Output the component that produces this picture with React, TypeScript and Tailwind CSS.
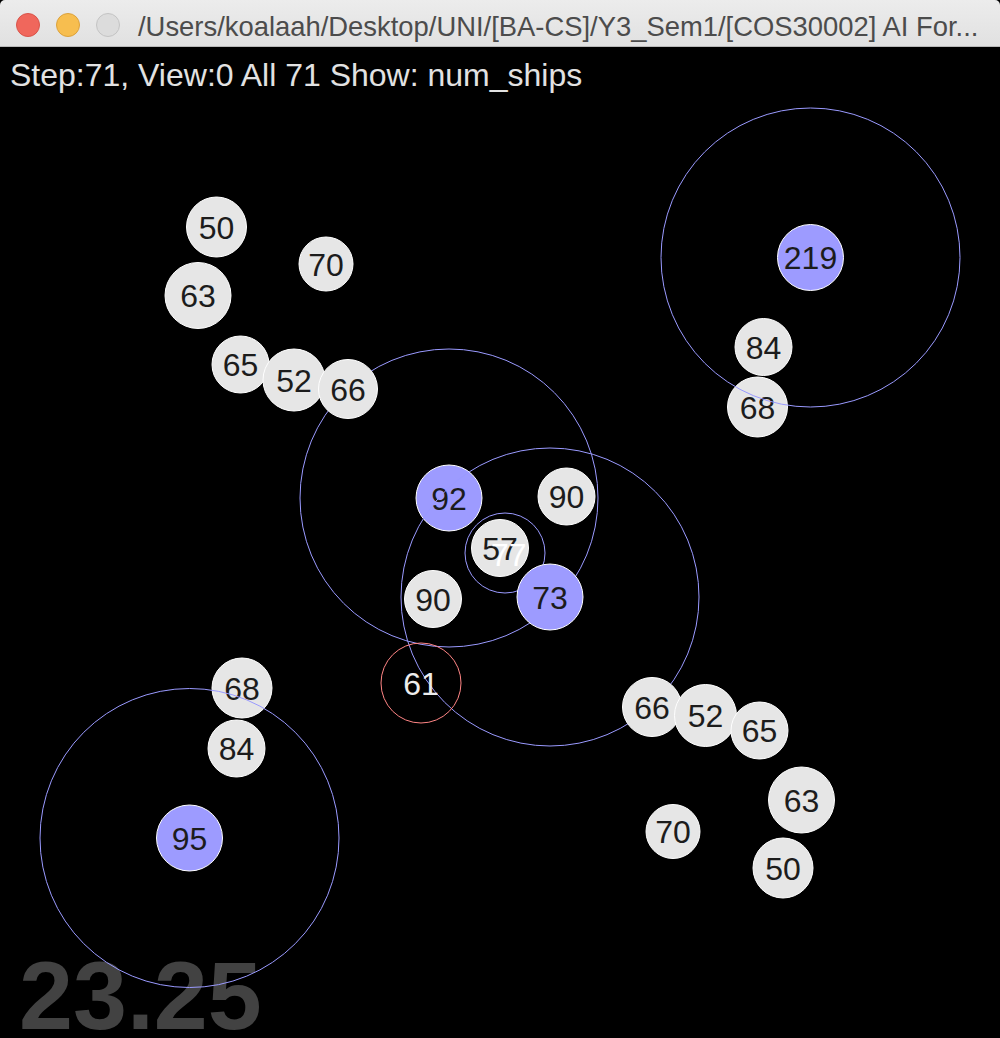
import React from 'react';

type Planet = {
  x: number;
  y: number;
  r: number;
  label: string;
  kind: 'neutral' | 'mine' | 'enemy';
  ring?: { r: number; dx?: number; dy?: number };
};

// draw order matters: later planets / rings paint over earlier ones
const planets: Planet[] = [
  { x: 757.5, y: 407, r: 30, label: '68', kind: 'neutral' },
  { x: 763.5, y: 347, r: 28.5, label: '84', kind: 'neutral' },
  { x: 810.5, y: 257.5, r: 33, label: '219', kind: 'mine', ring: { r: 149.5 } },
  { x: 242, y: 688, r: 30, label: '68', kind: 'neutral' },
  { x: 236.5, y: 748.5, r: 28.5, label: '84', kind: 'neutral' },
  { x: 189.5, y: 838, r: 33, label: '95', kind: 'mine', ring: { r: 149.5 } },
  { x: 500, y: 548, r: 28.5, label: '57', kind: 'neutral', ring: { r: 40, dx: 5, dy: 5 } },
  { x: 449, y: 498, r: 33, label: '92', kind: 'mine', ring: { r: 149 } },
  { x: 550, y: 597, r: 33, label: '73', kind: 'mine', ring: { r: 149 } },
  { x: 566.5, y: 496.5, r: 28.5, label: '90', kind: 'neutral' },
  { x: 433, y: 599, r: 28.5, label: '90', kind: 'neutral' },
  { x: 421, y: 683, r: 40, label: '61', kind: 'enemy' },
  { x: 216.5, y: 227, r: 30, label: '50', kind: 'neutral' },
  { x: 198, y: 295.5, r: 33, label: '63', kind: 'neutral' },
  { x: 326, y: 264, r: 27, label: '70', kind: 'neutral' },
  { x: 240.5, y: 364.5, r: 28.5, label: '65', kind: 'neutral' },
  { x: 294, y: 380, r: 31, label: '52', kind: 'neutral' },
  { x: 348, y: 389, r: 29.5, label: '66', kind: 'neutral' },
  { x: 652, y: 707, r: 29.5, label: '66', kind: 'neutral' },
  { x: 705.5, y: 715.5, r: 31, label: '52', kind: 'neutral' },
  { x: 759.5, y: 730.5, r: 28.5, label: '65', kind: 'neutral' },
  { x: 801.5, y: 800, r: 33, label: '63', kind: 'neutral' },
  { x: 673, y: 831.5, r: 27, label: '70', kind: 'neutral' },
  { x: 783, y: 868, r: 30, label: '50', kind: 'neutral' },
];

const FONT = '"Liberation Sans", Arial, Helvetica, sans-serif';

function PlanetShape({ p }: { p: Planet }) {
  if (p.kind === 'enemy') {
    return (
      <g>
        <circle cx={p.x} cy={p.y} r={p.r} fill="none" stroke="#ff8585" strokeWidth={1} />
        <text x={p.x} y={p.y + 11.5} textAnchor="middle" fontSize={32} fill="#ececec" fontFamily={FONT}>
          {p.label}
        </text>
      </g>
    );
  }
  return (
    <g>
      <circle
        cx={p.x}
        cy={p.y}
        r={p.r}
        fill={p.kind === 'mine' ? '#9d9bff' : '#e6e6e6'}
        stroke="#ffffff"
        strokeWidth={1}
      />
      <text x={p.x} y={p.y + 11.5} textAnchor="middle" fontSize={32} fill="#1c1c1c" fontFamily={FONT}>
        {p.label}
      </text>
      {p.ring && (
        <circle
          cx={p.x + (p.ring.dx ?? 0)}
          cy={p.y + (p.ring.dy ?? 0)}
          r={p.ring.r}
          fill="none"
          stroke="#9a9aff"
          strokeWidth={1}
        />
      )}
    </g>
  );
}

function TitleBar() {
  return (
    <div className="h-[47px] shrink-0 flex items-start pt-[13px] pl-[16px] gap-[18px] bg-gradient-to-b from-[#ececec] to-[#e1e1e1] border-b border-[#b9b9b9] rounded-t-[5px]">
      <div className="flex gap-[16px]">
        <span className="w-6 h-6 rounded-full bg-[#f0675c] border border-[#d9544a]" />
        <span className="w-6 h-6 rounded-full bg-[#f7be4f] border border-[#dca23c]" />
        <span className="w-6 h-6 rounded-full bg-[#dcdcdc] border border-[#c4c4c4]" />
      </div>
      <span className="text-[27.4px] leading-none text-[#4c4c4c] whitespace-nowrap font-['Liberation_Sans',Arial,sans-serif]">
        /Users/koalaah/Desktop/UNI/[BA-CS]/Y3_Sem1/[COS30002] AI For...
      </span>
    </div>
  );
}

export default function App() {
  return (
    <div className="w-[1000px] h-[1038px] flex flex-col bg-black overflow-hidden font-['Liberation_Sans',Arial,sans-serif]">
      <TitleBar />
      <div className="relative flex-1">
        <div className="pt-[12px] pl-[10px] text-[32px] leading-none text-[#e2e2e2] whitespace-nowrap">
          Step:71, View:0 All 71 Show: num_ships
        </div>
        <svg className="absolute inset-0" width={1000} height={991} viewBox="0 47 1000 991">
          <text x={19} y={1029} fontSize={97} fontWeight="bold" fill="#424242" fontFamily={FONT}>
            23.25
          </text>
          {planets.map((p, i) => (
            <PlanetShape key={i} p={p} />
          ))}
          <text x={491} y={566} fontSize={32} fill="#ffffff" fontFamily={FONT}>
            77
          </text>
        </svg>
      </div>
    </div>
  );
}
